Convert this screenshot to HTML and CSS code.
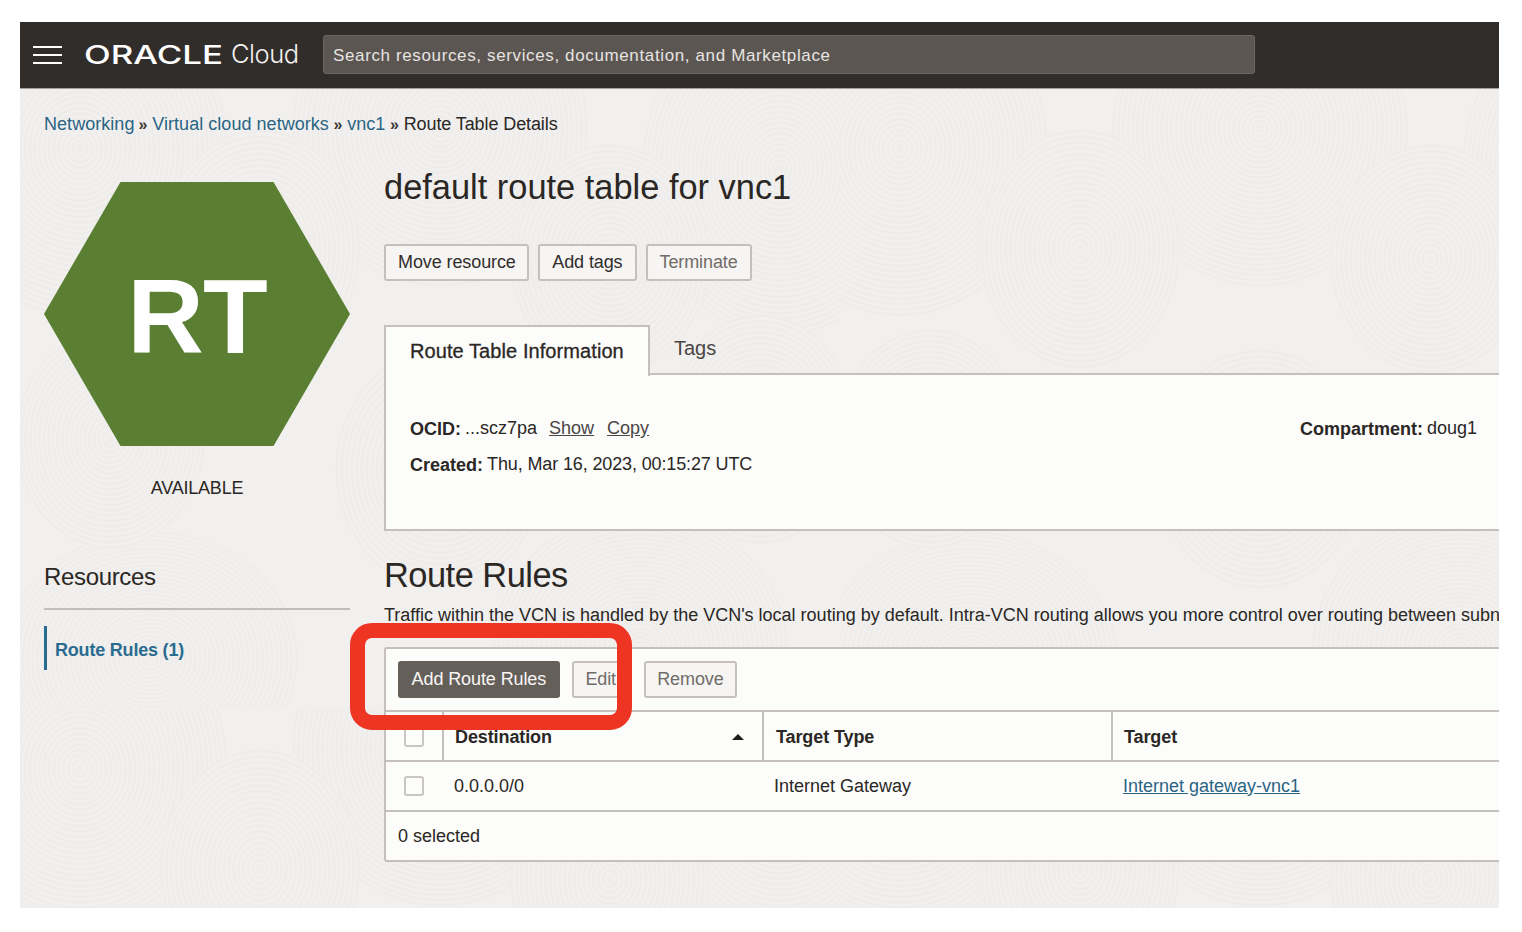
FILE: index.html
```html
<!DOCTYPE html>
<html lang="en">
<head>
<meta charset="utf-8">
<title>Route Table Details</title>
<link rel="stylesheet" href="styles.css">
</head>
<body>
<div class="frame">
  <header class="topbar">
    <div class="burger"><span></span><span></span><span></span></div>
    <svg class="logo" width="139" height="28" viewBox="0 0 139 28"><text x="0" y="23" textLength="139" lengthAdjust="spacingAndGlyphs" class="logo-text">ORACLE</text></svg>
    <span class="cloud">Cloud</span>
    <div class="search">Search resources, services, documentation, and Marketplace</div>
  </header>
  <div class="page">
    <nav class="crumbs"><a>Networking</a><i>»</i><a>Virtual cloud networks</a><i class="wide">»</i><a>vnc1</a><i class="wide">»</i><span>Route Table Details</span></nav>
    <div class="columns">
      <aside class="side">
        <div class="hex">RT</div>
        <div class="state">AVAILABLE</div>
        <div class="res-title">Resources</div>
        <div class="res-item">Route Rules (1)</div>
      </aside>
      <main class="main">
        <h1>default route table for vnc1</h1>
        <div class="btns top-btns">
          <button class="btn">Move resource</button>
          <button class="btn">Add tags</button>
          <button class="btn off">Terminate</button>
        </div>
        <div class="tabs">
          <div class="tab on">Route Table Information</div>
          <div class="tab">Tags</div>
        </div>
        <section class="info">
          <div class="info-row">
            <div><b>OCID:</b> <span class="val">...scz7pa</span><a class="act">Show</a><a class="act">Copy</a></div>
            <div><b>Compartment:</b> <span class="val">doug1</span></div>
          </div>
          <div class="info-row"><div class="wide-cell"><b>Created:</b> <span class="val">Thu, Mar 16, 2023, 00:15:27 UTC</span></div></div>
        </section>
        <h2>Route Rules</h2>
        <p class="desc">Traffic within the VCN is handled by the VCN's local routing by default. Intra-VCN routing allows you more control over routing between subnets.</p>
        <section class="rules">
          <div class="btns toolbar">
            <button class="btn primary">Add Route Rules</button>
            <button class="btn off">Edit</button>
            <button class="btn off">Remove</button>
          </div>
          <div class="grid head">
            <div class="cell chk"><span class="box"></span></div>
            <div class="cell dest">Destination<span class="caret"></span></div>
            <div class="cell">Target Type</div>
            <div class="cell">Target</div>
          </div>
          <div class="grid row">
            <div class="cell chk"><span class="box"></span></div>
            <div class="cell">0.0.0.0/0</div>
            <div class="cell">Internet Gateway</div>
            <div class="cell"><a class="link">Internet gateway-vnc1</a></div>
          </div>
          <div class="foot">0 selected</div>
        </section>
      </main>
    </div>
    <div class="callout"></div>
  </div>
</div>
</body>
</html>
```
FILE: styles.css
```css
* { box-sizing: border-box; }
html, body { margin: 0; height: 100%; background: #fff; overflow: hidden; }
body { padding: 22px 23px 24px 20px; font-family: "Liberation Sans", Arial, sans-serif; color: #2a2724; }
.frame { width: 1479px; height: 886px; display: flex; flex-direction: column; overflow: hidden; }
.topbar { flex: 0 0 67px; background: #312d2a; display: flex; align-items: center; padding-left: 13px; border-bottom: 1px solid #a5a19c; }
.burger { width: 29px; display: flex; flex-direction: column; gap: 6px; margin-right: 22px; }
.burger span { height: 2px; background: #fff; }
.logo { display: block; margin-right: 8px; overflow: visible; }
.logo-text { font-family: "Inter", sans-serif; font-size: 25px; font-weight: 500; fill: #fff; }
.cloud { font-family: "Inter", sans-serif; font-weight: 300; font-size: 25.5px; line-height: 30px; letter-spacing: -0.5px; color: #f4f2f0; width: 92px; padding-bottom: 2px; }
.search { width: 932px; height: 39px; margin-top: -1px; background: #5b5652; border: 1px solid #6b6661; border-radius: 3px; color: #e7e4e1; font-size: 17px; letter-spacing: 0.63px; line-height: 39px; padding-left: 9px; white-space: nowrap; }
.page { position: relative; flex: 1; min-height: 0; padding: 23px 0 0 24px; background-color: #f1f0ee;
  background-image: url("data:image/svg+xml,%3Csvg xmlns='http://www.w3.org/2000/svg' width='820' height='620'%3E%3Cdefs%3E%3CradialGradient id='a' r='.024' spreadMethod='repeat'%3E%3Cstop offset='0' stop-color='%23f2f1ef'/%3E%3Cstop offset='.5' stop-color='%23edecea'/%3E%3Cstop offset='1' stop-color='%23f2f1ef'/%3E%3C/radialGradient%3E%3CradialGradient id='b' r='.016' spreadMethod='repeat'%3E%3Cstop offset='0' stop-color='%23f2f1ef'/%3E%3Cstop offset='.5' stop-color='%23edecea'/%3E%3Cstop offset='1' stop-color='%23f2f1ef'/%3E%3C/radialGradient%3E%3C/defs%3E%3Cellipse cx='60' cy='60' rx='150' ry='170' fill='url(%23b)'/%3E%3Cellipse cx='760' cy='80' rx='140' ry='170' fill='url(%23b)'/%3E%3Cellipse cx='420' cy='40' rx='150' ry='160' fill='url(%23b)'/%3E%3Cellipse cx='620' cy='560' rx='150' ry='140' fill='url(%23b)'/%3E%3Cellipse cx='130' cy='570' rx='150' ry='130' fill='url(%23b)'/%3E%3Cellipse cx='240' cy='160' rx='100' ry='120' fill='url(%23a)'/%3E%3Cellipse cx='590' cy='170' rx='100' ry='115' fill='url(%23a)'/%3E%3Cellipse cx='420' cy='380' rx='105' ry='120' fill='url(%23a)'/%3E%3Cellipse cx='90' cy='350' rx='95' ry='110' fill='url(%23a)'/%3E%3Cellipse cx='740' cy='340' rx='95' ry='115' fill='url(%23a)'/%3E%3C/svg%3E"); }
.crumbs { font-size: 18px; line-height: 24px; height: 24px; white-space: nowrap; letter-spacing: -0.1px; }
.crumbs a { color: #2b6484; letter-spacing: 0.04px; }
.crumbs i { font-style: normal; font-weight: 700; font-size: 16px; margin: 0 5px 0 4px; color: #3b3734; }
.crumbs i.wide { margin-left: 4.5px; }
.columns { display: flex; align-items: flex-start; margin-top: 27px; }
.side { flex: 0 0 306px; margin: 19px 34px 0 0; }
.hex { width: 306px; height: 264px; background: #5a7f32; clip-path: polygon(25% 0, 75% 0, 100% 50%, 75% 100%, 25% 100%, 0 50%); display: flex; align-items: center; justify-content: center; color: #fff; font-weight: 700; font-size: 106px; letter-spacing: -1px; padding-top: 4px; }
.state { text-align: center; font-size: 18px; letter-spacing: -0.2px; line-height: 24px; margin-top: 30px; }
.res-title { font-size: 24px; line-height: 30px; letter-spacing: -0.35px; margin-top: 62px; padding-bottom: 16px; border-bottom: 2px solid #c2bdb8; }
.res-item { margin-top: 16px; height: 44px; border-left: 3px solid #2b6b8f; padding-left: 8px; color: #2b6b8f; font-weight: 700; font-size: 18px; line-height: 48px; letter-spacing: -0.2px; }
.main { flex: 0 0 1200px; min-width: 0; }
h1 { margin: 0; font-weight: 400; font-size: 34.4px; line-height: 48px; }
h2 { margin: 22px 0 0; font-weight: 400; font-size: 34.4px; line-height: 44px; letter-spacing: -0.5px; }
.btns { display: flex; }
.top-btns { gap: 9px; margin-top: 33px; }
.btn { height: 37px; padding: 0 11.6px; font: 18px/33px "Liberation Sans", Arial, sans-serif; letter-spacing: -0.1px; color: #312d2a; background: #f6f5f4; border: 2px solid #c5c0bb; border-radius: 3px; }
.top-btns .btn { padding: 0 12px; }
.top-btns .btn:first-child { padding-right: 11.5px; }
.btn.off { color: #716c68; }
.btn.primary { background: #655f5a; border-color: #655f5a; color: #f8f7f6; }
.tabs { display: flex; align-items: flex-start; margin-top: 44px; height: 50px; }
.tab { font-size: 20px; line-height: 46px; padding: 0 24px; color: #4a4643; }
.tab.on { width: 266px; height: 51px; line-height: 48px; padding: 0 0 0 24px; color: #2a2724; letter-spacing: 0.08px; -webkit-text-stroke: .3px #2a2724; background: #fcfcfb; border: 2px solid #c5c0bb; border-bottom: 0; white-space: nowrap; position: relative; z-index: 1; }
.info { height: 158px; margin-top: -2px; background: #fcfcfb; border: 2px solid #c5c0bb; border-right: 0; padding: 37px 0 0 24px; font-size: 18px; }
.info-row { display: grid; grid-template-columns: 890px auto; height: 36px; line-height: 34px; }
.wide-cell { grid-column: 1 / 3; }
.wide-cell .val { letter-spacing: -0.13px; }
.val { position: relative; top: -1px; margin-left: -1px; }
.act { text-decoration: underline; color: #4a4643; margin-left: 12px; position: relative; top: -1px; }
.act:last-child { margin-left: 13px; }
.desc { margin: 6px 0 0; font-size: 18px; line-height: 24px; white-space: nowrap; letter-spacing: 0; height: 20px; }
.rules { margin: 24px 0 0; height: 215px; background: #fcfcfb; border: 2px solid #c5c0bb; border-right: 0; border-radius: 3px 0 0 3px; }
.toolbar { gap: 12px; height: 61px; padding: 12px 0 0 12px; }
.toolbar .btn:nth-child(3) { margin-left: 2px; }
.grid { display: grid; grid-template-columns: 56px 320px 349px 1fr; border-top: 2px solid #c5c0bb; font-size: 18px; }
.head { height: 50px; font-weight: 700; letter-spacing: -0.1px; }
.row { height: 50px; }
.cell { display: flex; align-items: center; padding-left: 11px; border-left: 2px solid #c5c0bb; }
.head .cell { padding-top: 2px; }
.head .cell:nth-child(3) { padding-left: 12px; }
.row .cell { border-left: 2px solid transparent; padding-left: 10px; }
.cell.chk, .row .cell.chk { border-left: 0; padding-left: 18px; }
.dest { justify-content: space-between; padding-right: 18px; }
.box { width: 20px; height: 20px; border: 2px solid #c9c5c1; border-radius: 3px; background: #fcfcfb; }
.caret { width: 0; height: 0; border: 6px solid transparent; border-top: 0; border-bottom: 6px solid #1f1c1a; }
.link { color: #2b6484; text-decoration: underline; }
.foot { border-top: 2px solid #c5c0bb; height: 50px; line-height: 48px; padding-left: 12px; font-size: 18px; }
.callout { position: absolute; left: 330px; top: 534px; width: 282px; height: 107px; border: 15px solid #ee3524; border-radius: 22px; pointer-events: none; }
```
